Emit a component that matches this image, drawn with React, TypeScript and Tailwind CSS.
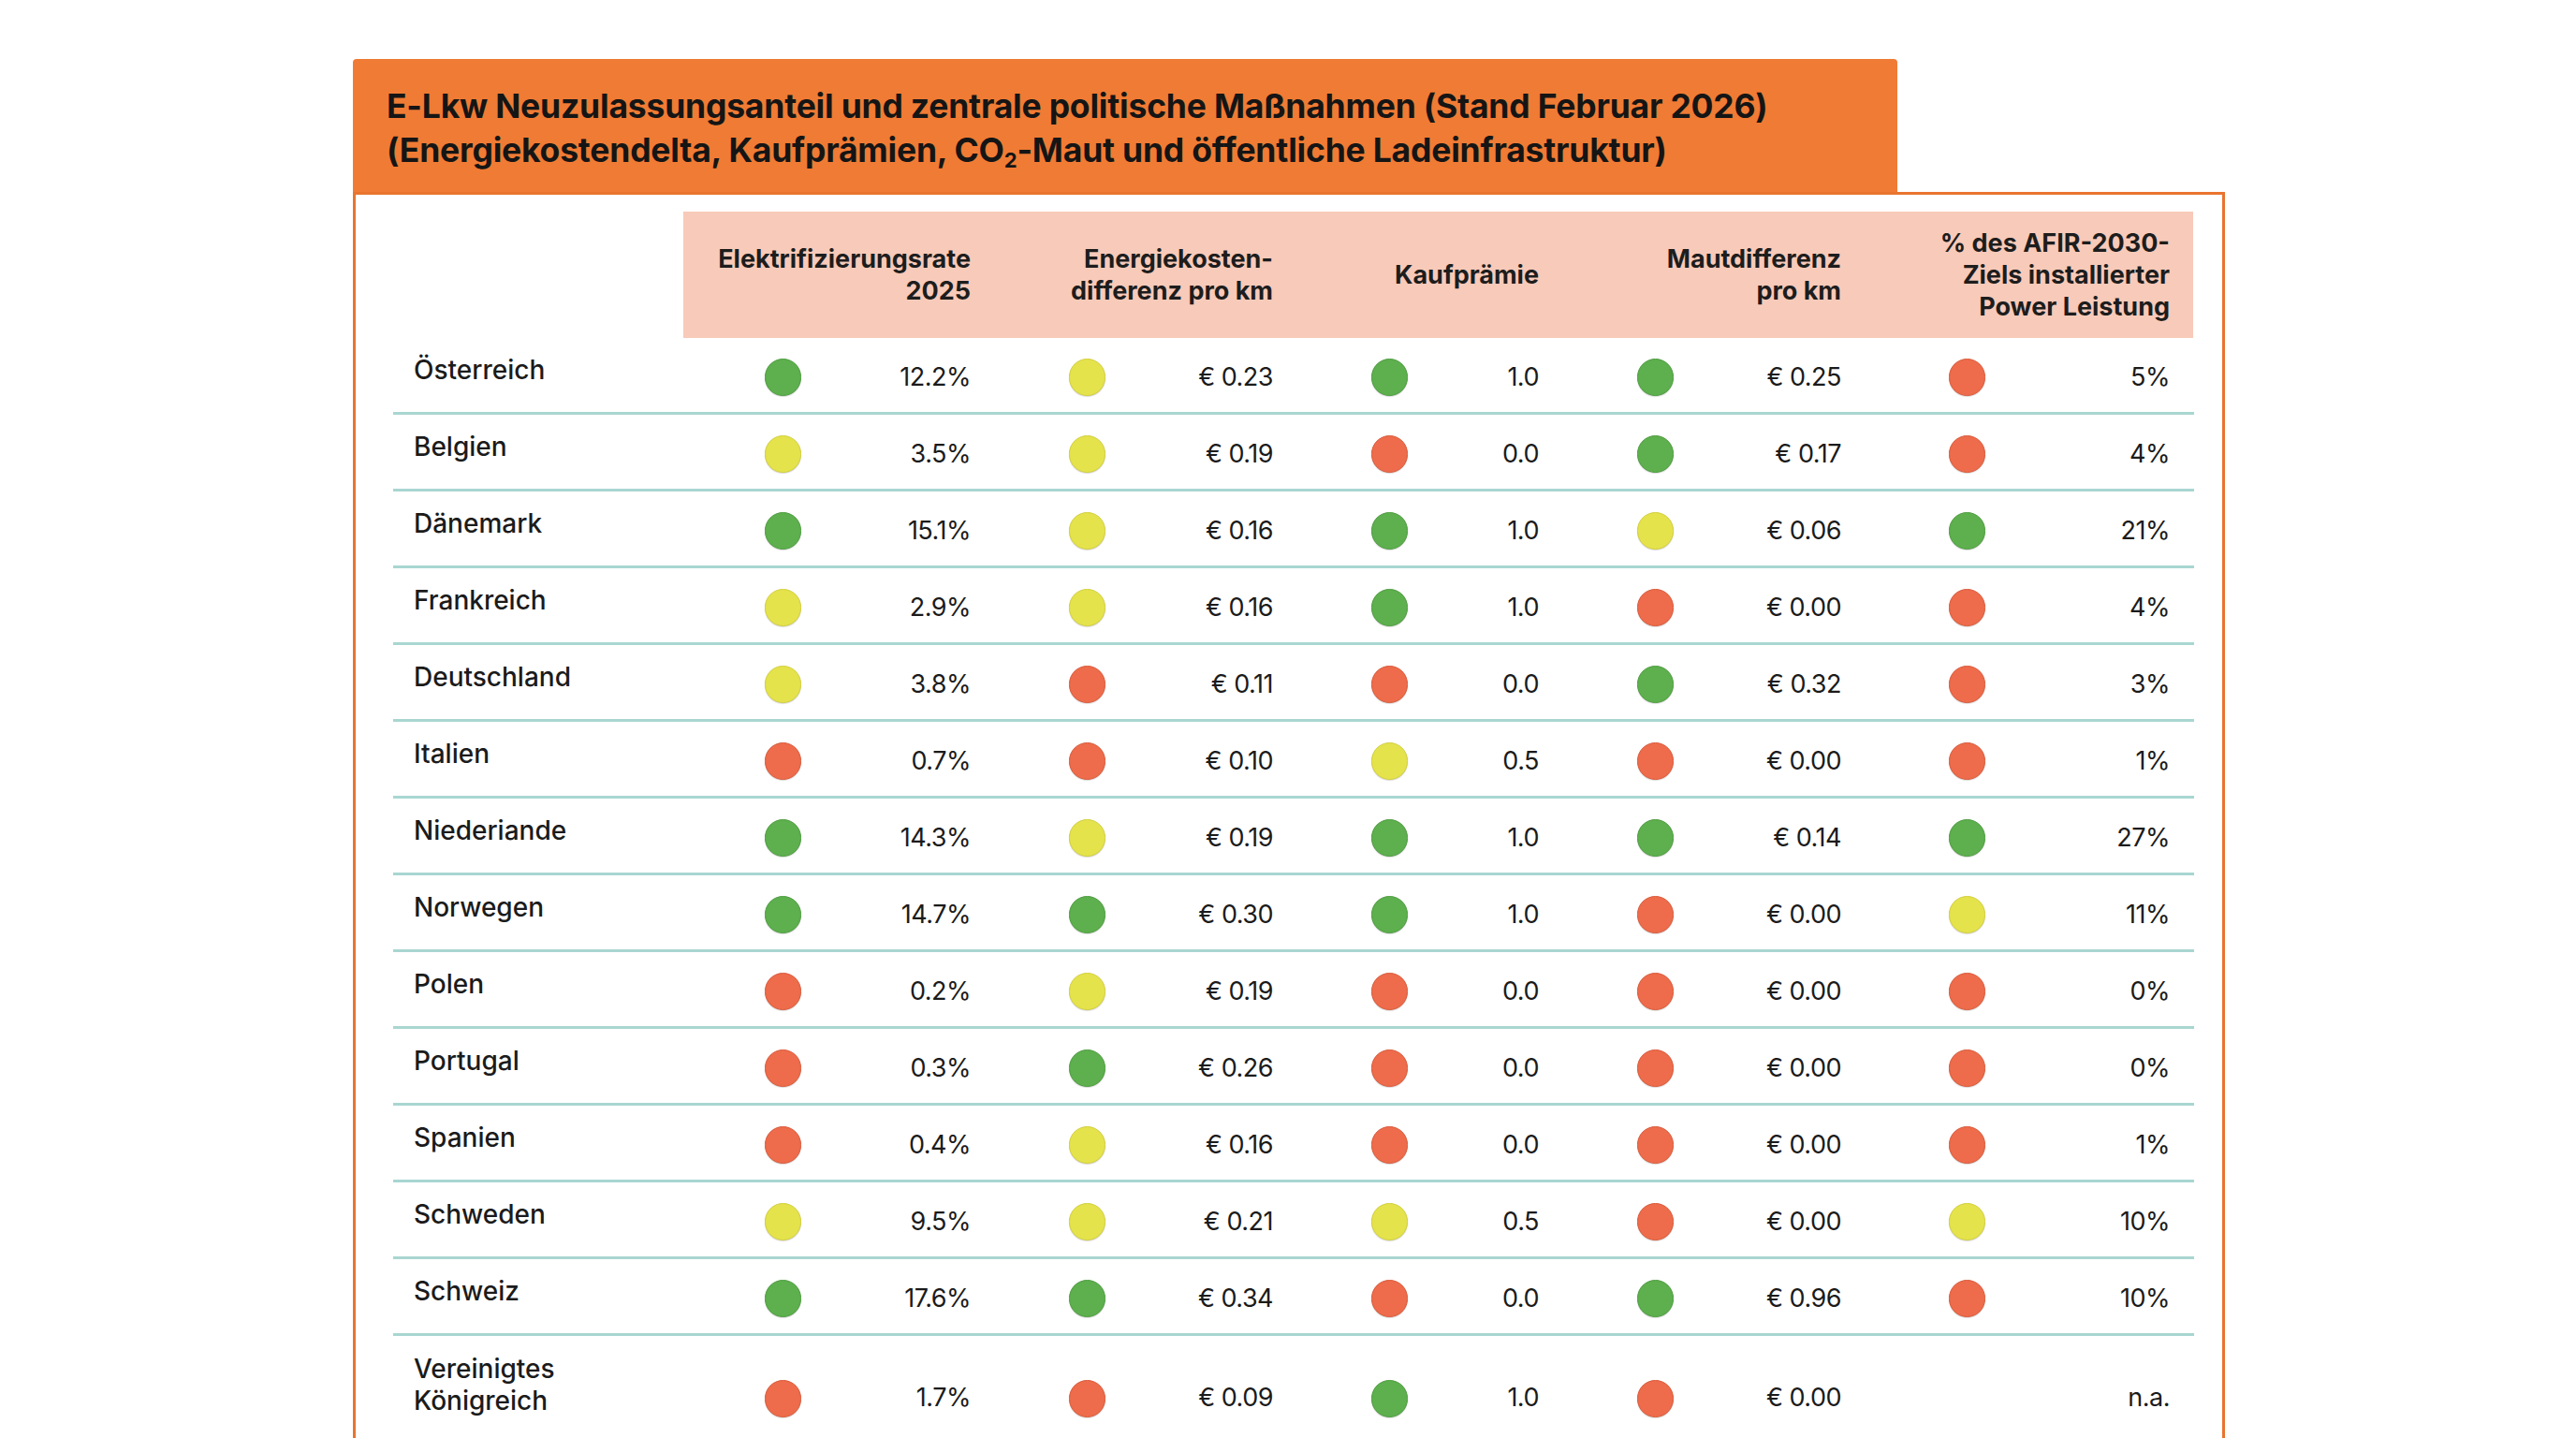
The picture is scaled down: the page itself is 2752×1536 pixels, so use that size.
import React from "react";

type Level = "g" | "y" | "r" | null;

const dotColor: Record<string, string> = {
  g: "bg-[#5DB04D] border-[#4F9C41]",
  y: "bg-[#E5E34C] border-[#D3CF3E]",
  r: "bg-[#EE6C4B] border-[#D95A3B]",
};

const rows: { name: string[]; cells: [Level, string][] }[] = [
  { name: ["Österreich"], cells: [["g", "12.2%"], ["y", "€ 0.23"], ["g", "1.0"], ["g", "€ 0.25"], ["r", "5%"]] },
  { name: ["Belgien"], cells: [["y", "3.5%"], ["y", "€ 0.19"], ["r", "0.0"], ["g", "€ 0.17"], ["r", "4%"]] },
  { name: ["Dänemark"], cells: [["g", "15.1%"], ["y", "€ 0.16"], ["g", "1.0"], ["y", "€ 0.06"], ["g", "21%"]] },
  { name: ["Frankreich"], cells: [["y", "2.9%"], ["y", "€ 0.16"], ["g", "1.0"], ["r", "€ 0.00"], ["r", "4%"]] },
  { name: ["Deutschland"], cells: [["y", "3.8%"], ["r", "€ 0.11"], ["r", "0.0"], ["g", "€ 0.32"], ["r", "3%"]] },
  { name: ["Italien"], cells: [["r", "0.7%"], ["r", "€ 0.10"], ["y", "0.5"], ["r", "€ 0.00"], ["r", "1%"]] },
  { name: ["Niederiande"], cells: [["g", "14.3%"], ["y", "€ 0.19"], ["g", "1.0"], ["g", "€ 0.14"], ["g", "27%"]] },
  { name: ["Norwegen"], cells: [["g", "14.7%"], ["g", "€ 0.30"], ["g", "1.0"], ["r", "€ 0.00"], ["y", "11%"]] },
  { name: ["Polen"], cells: [["r", "0.2%"], ["y", "€ 0.19"], ["r", "0.0"], ["r", "€ 0.00"], ["r", "0%"]] },
  { name: ["Portugal"], cells: [["r", "0.3%"], ["g", "€ 0.26"], ["r", "0.0"], ["r", "€ 0.00"], ["r", "0%"]] },
  { name: ["Spanien"], cells: [["r", "0.4%"], ["y", "€ 0.16"], ["r", "0.0"], ["r", "€ 0.00"], ["r", "1%"]] },
  { name: ["Schweden"], cells: [["y", "9.5%"], ["y", "€ 0.21"], ["y", "0.5"], ["r", "€ 0.00"], ["y", "10%"]] },
  { name: ["Schweiz"], cells: [["g", "17.6%"], ["g", "€ 0.34"], ["r", "0.0"], ["g", "€ 0.96"], ["r", "10%"]] },
  { name: ["Vereinigtes", "Königreich"], cells: [["r", "1.7%"], ["r", "€ 0.09"], ["g", "1.0"], ["r", "€ 0.00"], [null, "n.a."]] },
];

// column geometry: width, left padding (to dot), right padding (to value)
const cols = [
  "w-[321px] pl-[87px] pr-[14px]",
  "w-[323px] pl-[91px] pr-[14px]",
  "w-[284px] pl-[91px] pr-[14px]",
  "w-[323px] pl-[91px] pr-[14px]",
  "w-[362px] pl-[101px] pr-[25px]",
];

const headCols = [
  "w-[321px] pr-[14px]",
  "w-[323px] pr-[14px]",
  "w-[284px] pr-[14px]",
  "w-[323px] pr-[14px]",
  "w-[362px] pr-[25px]",
];

const headers = [
  ["Elektrifizierungsrate", "2025"],
  ["Energiekosten-", "differenz pro km"],
  ["Kaufprämie"],
  ["Mautdifferenz", "pro km"],
  ["% des AFIR-2030-", "Ziels installierter", "Power Leistung"],
];

function Dot({ level }: { level: Level }) {
  if (!level) return <span className="w-[40px] h-[40px]" />;
  return <span className={`w-[39px] h-[40px] rounded-full border-[1.5px] shadow-[0_1px_1px_rgba(0,0,0,0.15)] ${dotColor[level]}`} />;
}

export default function App() {
  return (
    <div className="min-h-screen bg-white pt-[63px] pl-[377px] font-['Inter','Liberation_Sans',sans-serif] text-[#1b1b1b] overflow-hidden h-[1536px]">
      <div className="w-[2000px]">
        {/* Title */}
        <div className="w-[1650px] h-[142px] bg-[#F07B34] rounded-t-[4px] pl-[36px] flex flex-col justify-center">
          <h1 className="text-[35.5px] font-bold leading-[47px] tracking-[-0.2px] text-[#151515] pt-[6px]">
            E-Lkw Neuzulassungsanteil und zentrale politische Maßnahmen (Stand Februar 2026)
            <br />
            (Energiekostendelta, Kaufprämien, CO<sub className="text-[22px]">2</sub>-Maut und öffentliche Ladeinfrastruktur)
          </h1>
        </div>

        {/* Table frame */}
        <div className="border-[3px] border-[#E9742E] pt-[18px] pl-[40px] pr-[30px] pb-[40px]">
          <div className="flex">
            <div className="w-[310px]" />
            <div className="flex bg-[#F8CAB9] h-[135px]">
              {headers.map((h, i) => (
                <div key={i} className={`${headCols[i]} flex flex-col justify-center items-end text-right text-[27px] font-bold leading-[34px] text-[#1d1d1d] whitespace-nowrap`}>
                  {h.map((l) => (
                    <span key={l}>{l}</span>
                  ))}
                </div>
              ))}
            </div>
          </div>

          {rows.map((row, ri) => {
            const last = ri === rows.length - 1;
            return (
              <div
                key={ri}
                className={`flex items-center ${last ? "h-[128px]" : "h-[82px] border-b-[3px] border-[#A9D6D1]"}`}
              >
                <div className={`w-[310px] pl-[22px] text-[28px] leading-[34px] font-medium ${last ? "pb-[24px]" : "pb-[12px]"}`}>
                  {row.name.map((n) => (
                    <div key={n}>{n}</div>
                  ))}
                </div>
                {row.cells.map(([lvl, val], ci) => (
                  <div key={ci} className={`${cols[ci]} flex items-center justify-between pt-[5px]`}>
                    <Dot level={lvl} />
                    <span className="text-[27px] tracking-[-0.5px]">{val}</span>
                  </div>
                ))}
              </div>
            );
          })}
        </div>
      </div>
    </div>
  );
}
